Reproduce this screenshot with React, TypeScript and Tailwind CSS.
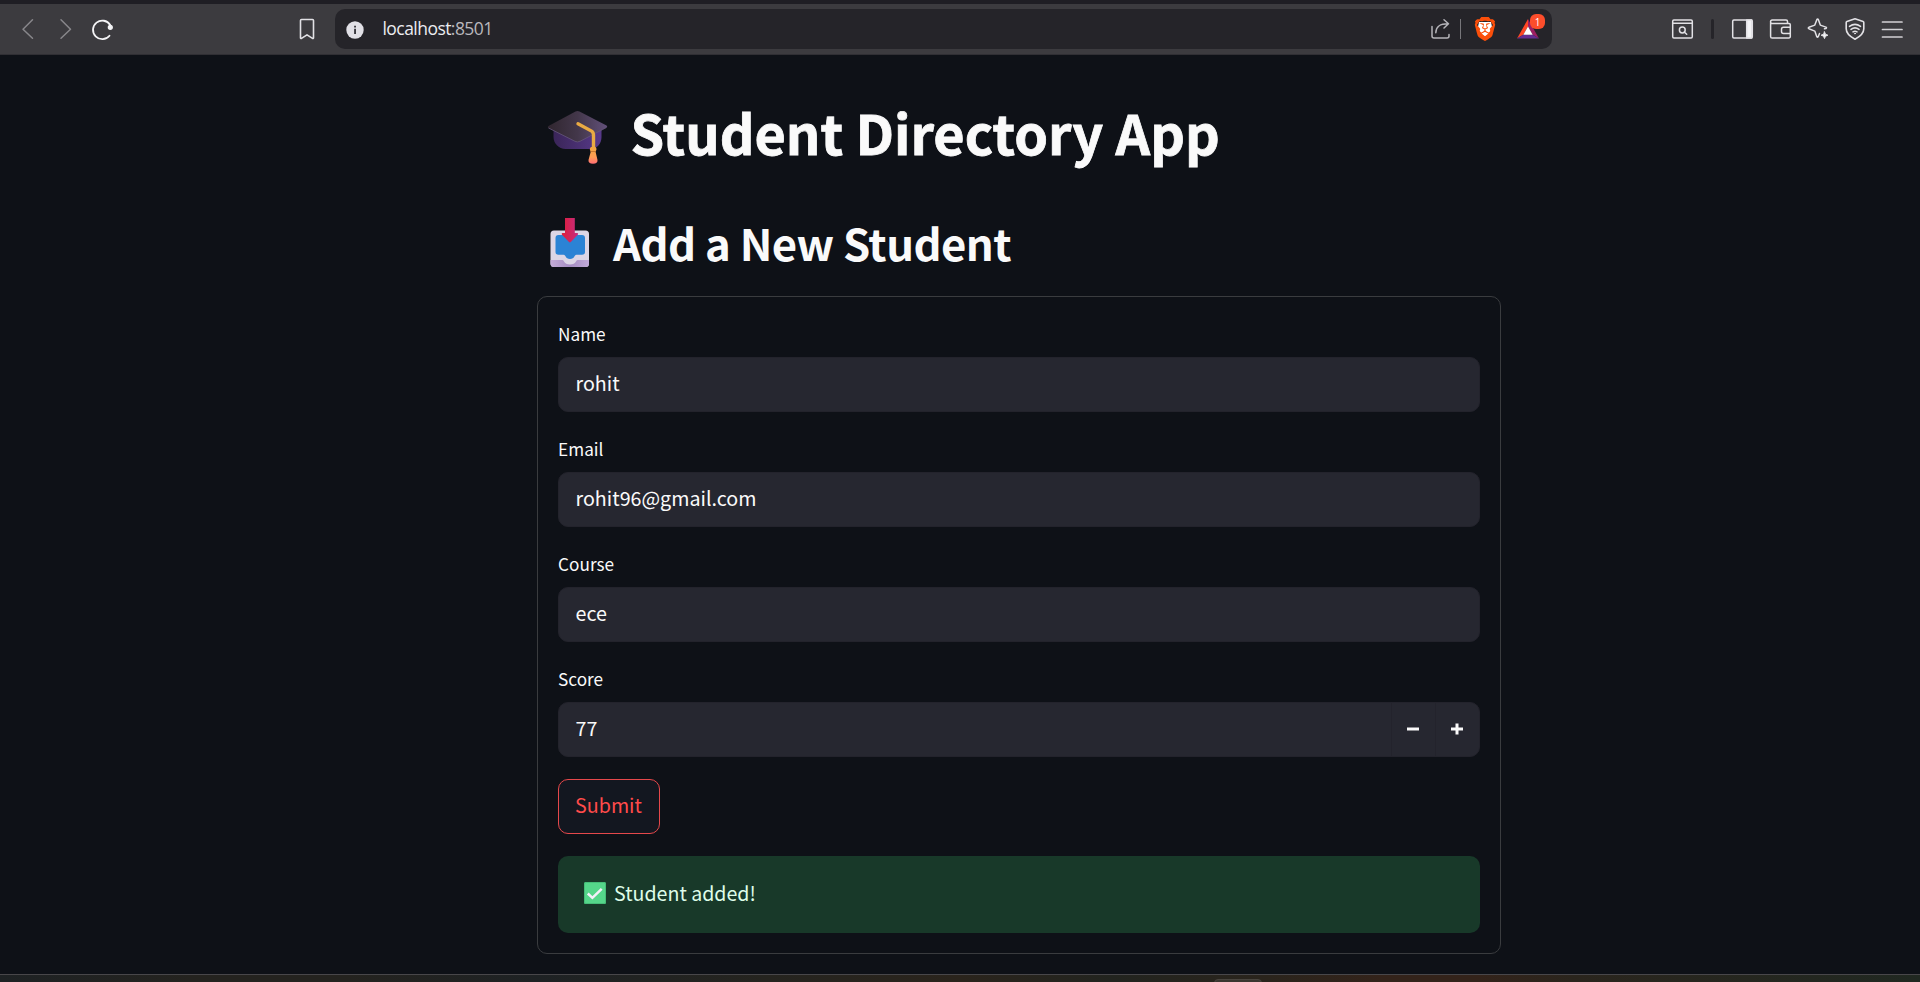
import React from "react";
import { SiBrave } from "react-icons/si";

const line = { fill: "none", strokeWidth: 1.5, strokeLinecap: "round", strokeLinejoin: "round" } as const;

function Toolbar() {
  return (
    <header className="flex h-[55px] flex-col bg-[#3c3b3f]">
      <div className="h-1 shrink-0 bg-[#1f1e24]" />
      <div className="flex h-[50px] shrink-0 items-center">
        <svg className="ml-[21px] h-[22px] w-[14px]" viewBox="0 0 14 22" stroke="#88878b" {...line}>
          <path d="M11.5 1.8 2 11.3l9.500 9" />
        </svg>
        <svg className="ml-[24px] h-[22px] w-[14px]" viewBox="0 0 14 22" stroke="#88878b" {...line}>
          <path d="M2 1.800 11.500 11.300 2 20.300" />
        </svg>
        <svg className="ml-[18px] h-[24px] w-[24px]" viewBox="0 0 24 24" stroke="#f4f4f6" {...line} strokeWidth={1.8}>
          <path d="M19.200 8A9.300 9.300 0 1 0 18.500 18.800" />
          <circle cx="19.300" cy="10.300" r="1.900" fill="#f4f4f6" strokeWidth="1.400" />
        </svg>
        <svg className="ml-[182.500px] h-[22px] w-[18px]" viewBox="0 0 18 22" stroke="#e2e1e5" {...line} strokeWidth={1.6}>
          <path d="M3.500 1.500h11a1 1 0 0 1 1 1v17.500a.6.6 0 0 1-1 .4L9 16.800l-5.500 3.600a.6.6 0 0 1-1-.4V2.500a1 1 0 0 1 1-1Z" />
        </svg>
        <div className="ml-[19.500px] flex h-10 w-[1217px] items-center rounded-[10px] bg-[#252429]">
          <svg className="ml-[11px] mt-[2px] h-[18px] w-[18px]" viewBox="0 0 18 18">
            <circle cx="9" cy="9" r="8.700" fill="#e1e0e6" />
            <path d="M8.100 7.700h1.900V13H8.100zM8.100 4.700h1.900v1.800H8.100z" fill="#3a393f" />
          </svg>
          <span className="ml-[18.5px] w-[110.5px] whitespace-nowrap pb-[2px] font-['Open_Sans',sans-serif] text-[17.500px] leading-6 tracking-[-0.550px] text-[#ececf0]">
            localhost<span className="text-[#b9b8bd]">:8501</span>
          </span>
          <svg className="ml-[937px] h-[22px] w-[22px]" viewBox="0 0 22 22" stroke="#b5b4b9" {...line}>
            <path d="M2 8.500v9.500a2 2 0 0 0 2 2h13a2 2 0 0 0 2-2v-1.500M5.800 14.800C6 8.500 9.500 5.800 18.300 5.800M14 1.800l4.500 4-4.500 4.200" />
          </svg>
          <div className="ml-[8px] h-5 w-px bg-[#77767a]" />
          <div className="relative ml-[12px] flex h-[24px] w-[24px] items-center justify-center">
            <svg className="absolute top-0 left-0 h-[24px] w-[24px]" viewBox="0 0 24 24">
              <path d="M6 5h12l1 5-2 7-5 4-5-4-2-7z" fill="#fff" />
            </svg>
            <SiBrave size={24} color="#fb4f0a" className="relative shrink-0" />
          </div>
          <div className="relative ml-[19px] h-[22px] w-[24px]">
            <svg className="h-[22px] w-[24px]" viewBox="0 0 24 22">
              <path d="M12 1 1 20.500 7.500 16.500 12 8.500z" fill="#ff4724" />
              <path d="M12 1 23 20.500 16.500 16.500 12 8.500z" fill="#9e1f63" />
              <path d="M1 20.500h22L16.500 16.500h-9z" fill="#662d91" />
              <path d="M12 8.500 7.300 16.700h9.400z" fill="#fff" />
            </svg>
            <div className="absolute -top-[4px] left-[14px] flex h-[15px] w-[15px] items-center justify-center rounded-[6px] bg-[#fc4d2b] font-['Open_Sans',sans-serif] text-[10px] leading-none text-white">
              1
            </div>
          </div>
        </div>
        <svg className="ml-[119px] h-[22px] w-[23px]" viewBox="0 0 23 22" stroke="#e2e1e5" {...line}>
          <rect x="1.700" y="2" width="19.600" height="18" rx="1.200" />
          <path d="M2 5.300h19" />
          <circle cx="11.300" cy="12" r="2.900" />
          <path d="m13.500 14.300 2.200 2" />
        </svg>
        <div className="ml-[16.5px] h-5 w-[3px] rounded-full bg-[#252429]" />
        <svg className="ml-[17px] h-[22px] w-[23px]" viewBox="0 0 23 22" stroke="#e2e1e5" {...line}>
          <rect x="1.700" y="2" width="19.600" height="18" rx="1.200" />
          <path d="M15.700 2h5v18h-5z" fill="#f4f4f6" />
        </svg>
        <svg className="ml-[15px] h-[22px] w-[23px]" viewBox="0 0 23 22" stroke="#e2e1e5" {...line}>
          <path d="M18.500 5.500V3.500A1.500 1.500 0 0 0 17 2H3.300a1.700 1.700 0 0 0 0 3.500H20A1.300 1.300 0 0 1 21.300 6.800v11.500A1.500 1.500 0 0 1 19.800 20H3.200a1.600 1.600 0 0 1-1.600-1.600V3.800" />
          <path d="M21.300 9.300H14.500a2 2 0 0 0-2 2v2.200a2 2 0 0 0 2 2h6.800" />
        </svg>
        <svg className="ml-[14px] h-[24px] w-[24px]" viewBox="0 0 24 24" stroke="#e2e1e5" {...line}>
          <path d="M18.500 11.800 19.900 11.500q1.200-.7 0-1.400l-5.600-2-2-5.600q-.7-1.200-1.400 0l-2.100 5.600-5.900 2.200q-1.200.7 0 1.400l5.900 2.400 2 5.600q.7 1.200 1.400 0l1.300-3.200" />
          <path d="m18.500 14.800 1 2.400 2.400 1-2.400 1-1 2.400-1-2.400-2.400-1 2.400-1z" fill="#f4f4f6" strokeWidth="1" />
        </svg>
        <svg className="ml-[14.5px] h-[24px] w-[22px]" viewBox="0 0 22 24" stroke="#e2e1e5" {...line} strokeWidth={1.600}>
          <path d="M11 1.800 2.900 4.500a1 1 0 0 0-.7 1v6.300c0 4.500 3.500 7.700 8.800 10.400 5.300-2.700 8.800-5.900 8.800-10.400V5.500a1 1 0 0 0-.7-1z" />
          <path d="M5.500 9.400q5.500-4 11 0M7 12.300q4-2.800 8 0M9 14.900q2-1.300 4 0" />
          <circle cx="11" cy="16.500" r=".5" fill="#e2e1e5" strokeWidth="1" />
        </svg>
        <svg className="ml-[14.5px] h-[20px] w-[23px]" viewBox="0 0 23 20" stroke="#d2d1d5" {...line} strokeWidth={1.700}>
          <path d="M1.500 3h19.500M1.500 10.500h19.500M1.500 18h19.500" />
        </svg>
      </div>
      <div className="h-px shrink-0 bg-[#302f34]" />
    </header>
  );
}

function GraduationCap() {
  return (
    <svg className="mt-[8px] h-[55px] w-[61px] shrink-0" viewBox="0 0 61 55">
      <defs>
        <linearGradient id="capTop" x1="0" y1="0" x2="1" y2="0">
          <stop offset="0" stopColor="#30262f" />
          <stop offset="0.5" stopColor="#43374a" />
          <stop offset="1" stopColor="#62507a" />
        </linearGradient>
        <linearGradient id="capBase" x1="0" y1="0" x2="1" y2="0">
          <stop offset="0" stopColor="#3a2558" />
          <stop offset="1" stopColor="#57398a" />
        </linearGradient>
        <linearGradient id="tassel" x1="0" y1="0" x2="0" y2="1">
          <stop offset="0" stopColor="#f0a63f" />
          <stop offset="0.6" stopColor="#ff9d55" />
          <stop offset="1" stopColor="#ff6d75" />
        </linearGradient>
      </defs>
      <path d="M6.500 19h48v8c0 6-4 12-11 12h-25c-7 0-12-6-12-12z" fill="url(#capBase)" />
      <path d="M28.500 1.600q2-1 4 0L59.500 15.500q1.500 1 0 2L33 31.300q-2.500 1.200-5 0L1.500 18q-1.500-1 0-2z" fill="url(#capTop)" />
      <path d="M1.500 18 28 31.300q2.500 1.200 5 0L59.500 17.500" fill="none" stroke="#65557a" strokeWidth=".8" />
      <path d="M31 13.800 45 21.300q1.500 1.200 1.500 3.500V39" fill="none" stroke="#e9aa43" strokeWidth="3.400" strokeLinecap="round" />
      <path d="M44 37h4.500q2 2 0 4.500L50.500 50q.3 3.800-4.500 3.800T41.500 50l2.300-8.500q-2-2.500.2-4.500z" fill="url(#tassel)" />
      <path d="M43.500 41.500h5" stroke="#c97830" strokeWidth="1" />
    </svg>
  );
}

function InboxTray() {
  return (
    <svg className="h-[50px] w-[40px] shrink-0" viewBox="0 0 40 50">
      <defs>
        <linearGradient id="arrow" x1="0" y1="0" x2="1" y2="0">
          <stop offset="0" stopColor="#df1d39" />
          <stop offset="1" stopColor="#c52c80" />
        </linearGradient>
        <linearGradient id="tray" x1="0" y1="0" x2="1" y2="0">
          <stop offset="0" stopColor="#c5add9" />
          <stop offset="0.500" stopColor="#a58dc2" />
          <stop offset="1" stopColor="#c1abd9" />
        </linearGradient>
      </defs>
      <rect x=".5" y="12.500" width="38.500" height="36.500" rx="3.500" fill="#dcd6e6" />
      <path d="M.5 42H12.500q1 0 1.500 1.500 1.500 3 6 3t6-3Q26.500 42 27.500 42h11.500v3.500a3.500 3.500 0 0 1-3.500 3.500H4a3.500 3.500 0 0 1-3.500-3.500z" fill="url(#tray)" />
      <path d="M8.500 17H32q3 0 3 3v14q0 2.800-3 2.800h-5.500q-1.500 0-2 1.500-1.200 2.700-4.500 2.700t-4.500-2.700q-.5-1.500-2-1.500h-5Q5.500 36.800 5.500 34V20q0-3 3-3z" fill="#2b83d5" />
      <path d="M15 0h9.800v15h2.700q1.200.6.300 1.800l-7 7.300q-.9.800-1.800 0l-7-7.300q-.9-1.200.3-1.800H15z" fill="url(#arrow)" />
    </svg>
  );
}

function Field({ label, value, stepper }: { label: string; value: string; stepper?: boolean }) {
  return (
    <div className="h-[115.1px]">
      <label className="flex h-[35px] items-start pl-[0.600px] text-[17.200px] leading-[24.400px] text-[#fafafa]">{label}</label>
      <div className="flex h-[55px] items-stretch rounded-[10px] border border-[#23232c] bg-[#262730] text-[19.700px] text-[#fafafa]">
        <span className="flex-1 pl-[17px] leading-[50px]">{value}</span>
        {stepper && (
          <>
            <button className="flex w-[44px] items-center justify-center border-l border-[#23232c]">
              <svg className="mr-[1.500px] mb-px" width="12" height="12" viewBox="0 0 12 12"><path d="M0 6h12" stroke="#fafafa" strokeWidth="3" /></svg>
            </button>
            <button className="flex w-[44px] items-center justify-center border-l border-[#23232c]">
              <svg className="mr-[1.500px] mb-px" width="12" height="12" viewBox="0 0 12 12"><path d="M0 6h12M6 .5v11" stroke="#fafafa" strokeWidth="3" /></svg>
            </button>
          </>
        )}
      </div>
    </div>
  );
}

export default function App() {
  return (
    <div className="flex h-[982px] w-[1920px] flex-col overflow-hidden bg-[#0e1117] font-['Noto_Sans_CJK_SC',sans-serif]">
      <Toolbar />
      <main className="ml-[537px] flex h-[919px] w-[964px] shrink-0 flex-col">
        <h1 className="mt-[42px] flex h-[73px] items-center pl-[10px] text-[54px] leading-[69px] font-bold text-[#fafafa] [-webkit-text-stroke:0.8px_#fafafa]">
          <GraduationCap />
          <span className="mb-[4px] ml-[22.500px] whitespace-nowrap">Student Directory App</span>
        </h1>
        <h2 className="mt-[43px] flex h-[60px] items-center pl-[12.500px] text-[43.700px] leading-[58px] font-semibold tracking-[-0.550px] text-[#fafafa]">
          <InboxTray />
          <span className="mb-[2px] ml-[23.500px] whitespace-nowrap">Add a New Student</span>
        </h2>
        <form className="mt-[23px] h-[658px] rounded-[10px] border border-[#3a3c3f] pt-[25px] pr-[20px] pl-[19.500px]">
          <Field label="Name" value="rohit" />
          <Field label="Email" value="rohit96@gmail.com" />
          <Field label="Course" value="ece" />
          <Field label="Score" value="77" stepper />
          <button type="button" className="mt-[-3px] flex h-[55px] w-[102px] justify-center rounded-[10px] border border-[#e5484b] bg-[#131720] text-[19.700px] leading-[50px] text-[#ff4b4b]">
            Submit
          </button>
          <div className="mt-[21.500px] flex h-[77px] items-center rounded-[10px] bg-[#183929] pl-[26.500px] text-[19.600px] text-[#dffde9]">
            <svg className="mb-[2px] h-[22px] w-[22px]" viewBox="0 0 22 22">
              <rect width="22" height="22" rx="1.500" fill="#55d68a" />
              <rect x=".5" y=".5" width="21" height="21" rx="1.500" fill="none" stroke="#46bd78" />
              <path d="m3.800 11.500 4.600 4.300 9.300-9" fill="none" stroke="#f4f0fa" strokeWidth="2.500" />
            </svg>
            <span className="mb-[4px] ml-[8px]">Student added!</span>
          </div>
        </form>
      </main>
      <footer className="flex h-2 shrink-0 border-t border-[#48474a] bg-[linear-gradient(90deg,#1e2224_0%,#24231f_10%,#24231f_18%,#1e2224_28%,#25241f_40%,#2a241c_50%,#22241f_58%,#2a241c_66%,#33231a_72%,#33231a_77%,#2a251d_82%,#202821_100%)]">
        <div className="mt-[4px] ml-[1214px] h-[6px] w-[48px] rounded-t-[4px] border border-[#48443e] bg-[#3a3630]" />
      </footer>
    </div>
  );
}
